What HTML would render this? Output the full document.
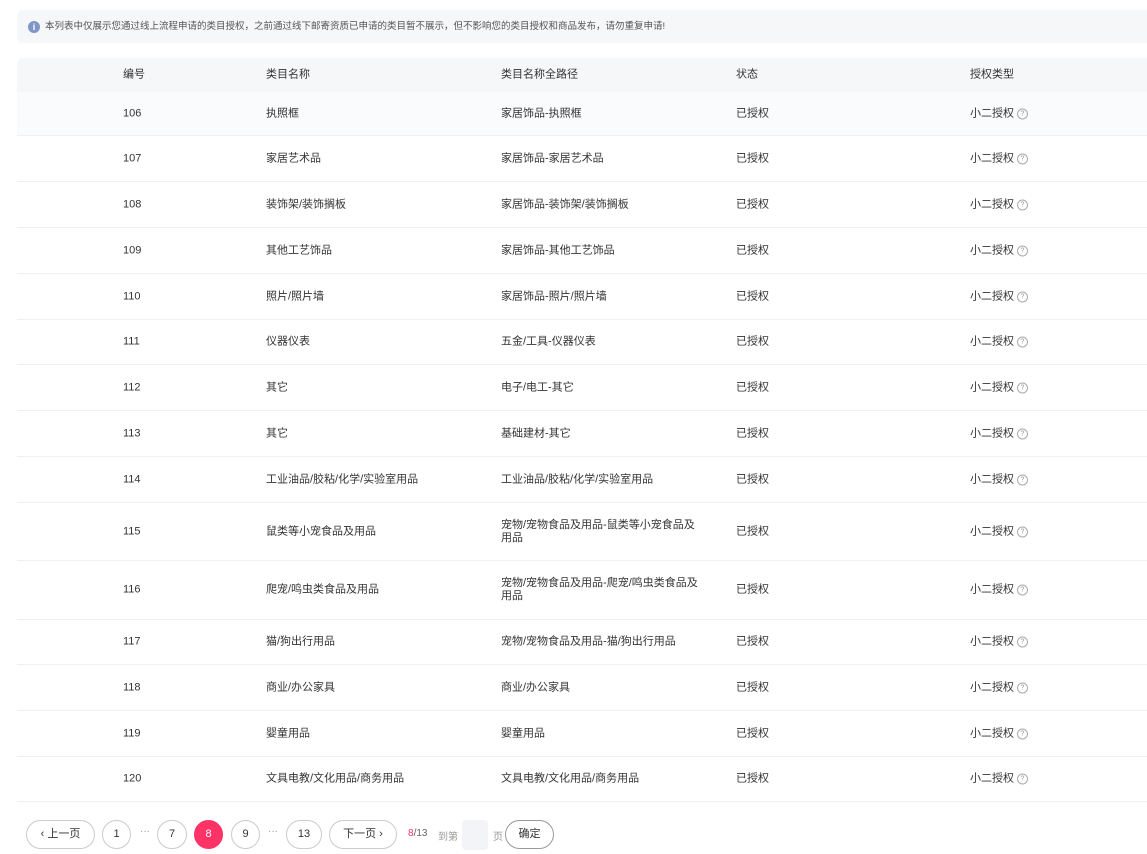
<!DOCTYPE html><html><head><meta charset="utf-8"><style>
*{margin:0;padding:0;box-sizing:border-box}
body{width:1147px;height:854px;background:#fff;font-family:"Liberation Sans","Noto Sans CJK SC",sans-serif;font-size:11px;color:#333;position:relative;overflow:hidden}
.info{position:absolute;left:17px;top:10px;width:1140px;height:33px;background:#f6f7f9;border-radius:6px;font-size:9.5px;color:#555;line-height:33px;padding-left:28px}
.info i{position:absolute;left:11px;top:11px;width:12px;height:12px;border-radius:50%;background:#7f96c7;color:#fff;font-style:normal;font-size:9px;line-height:12px;text-align:center;font-weight:bold}
.row{position:absolute;left:17px;width:1140px;border-bottom:1px solid #eef0f3}
.row span{position:absolute;top:50%;transform:translateY(-50%);line-height:13px}
.c1{left:106px}.c2{left:249px}.c3{left:484px;width:204px}.c4{left:719px}.c5{left:953px;display:flex;align-items:center}
.hd{top:58px;height:34px;background:#f6f7f9;border-radius:6px 0 0 0;border:none}
.q{display:inline-block;width:11px;height:11px;border:1px solid #aaa;border-radius:50%;font-size:7px;line-height:9px;text-align:center;color:#999;margin-left:3px;font-weight:normal}
.b{position:absolute;top:820px;height:29px;border:1px solid #c9cbd0;border-radius:15px;text-align:center;line-height:27px;font-size:11px;color:#333;background:#fff}
.t{position:absolute;top:828px;font-size:10px;color:#999}
</style></head><body>
<div class="info"><i>i</i>本列表中仅展示您通过线上流程申请的类目授权，之前通过线下邮寄资质已申请的类目暂不展示，但不影响您的类目授权和商品发布，请勿重复申请!</div>
<div class="row hd"><span class="c1" style="left:106px">编号</span><span class="c2">类目名称</span><span class="c3">类目名称全路径</span><span class="c4">状态</span><span class="c5">授权类型</span></div>
<div class="row" style="top:92px;height:44px;background:#fafbfd"><span class="c1">106</span><span class="c2">执照框</span><span class="c3">家居饰品-执照框</span><span class="c4">已授权</span><span class="c5">小二授权<b class="q">?</b></span></div>
<div class="row" style="top:136px;height:46px"><span class="c1">107</span><span class="c2">家居艺术品</span><span class="c3">家居饰品-家居艺术品</span><span class="c4">已授权</span><span class="c5">小二授权<b class="q">?</b></span></div>
<div class="row" style="top:182px;height:46px"><span class="c1">108</span><span class="c2">装饰架/装饰搁板</span><span class="c3">家居饰品-装饰架/装饰搁板</span><span class="c4">已授权</span><span class="c5">小二授权<b class="q">?</b></span></div>
<div class="row" style="top:228px;height:46px"><span class="c1">109</span><span class="c2">其他工艺饰品</span><span class="c3">家居饰品-其他工艺饰品</span><span class="c4">已授权</span><span class="c5">小二授权<b class="q">?</b></span></div>
<div class="row" style="top:274px;height:46px"><span class="c1">110</span><span class="c2">照片/照片墙</span><span class="c3">家居饰品-照片/照片墙</span><span class="c4">已授权</span><span class="c5">小二授权<b class="q">?</b></span></div>
<div class="row" style="top:320px;height:45px"><span class="c1">111</span><span class="c2">仪器仪表</span><span class="c3">五金/工具-仪器仪表</span><span class="c4">已授权</span><span class="c5">小二授权<b class="q">?</b></span></div>
<div class="row" style="top:365px;height:46px"><span class="c1">112</span><span class="c2">其它</span><span class="c3">电子/电工-其它</span><span class="c4">已授权</span><span class="c5">小二授权<b class="q">?</b></span></div>
<div class="row" style="top:411px;height:46px"><span class="c1">113</span><span class="c2">其它</span><span class="c3">基础建材-其它</span><span class="c4">已授权</span><span class="c5">小二授权<b class="q">?</b></span></div>
<div class="row" style="top:457px;height:46px"><span class="c1">114</span><span class="c2">工业油品/胶粘/化学/实验室用品</span><span class="c3">工业油品/胶粘/化学/实验室用品</span><span class="c4">已授权</span><span class="c5">小二授权<b class="q">?</b></span></div>
<div class="row" style="top:503px;height:58px"><span class="c1">115</span><span class="c2">鼠类等小宠食品及用品</span><span class="c3">宠物/宠物食品及用品-鼠类等小宠食品及<br>用品</span><span class="c4">已授权</span><span class="c5">小二授权<b class="q">?</b></span></div>
<div class="row" style="top:561px;height:59px"><span class="c1">116</span><span class="c2">爬宠/鸣虫类食品及用品</span><span class="c3">宠物/宠物食品及用品-爬宠/鸣虫类食品及<br>用品</span><span class="c4">已授权</span><span class="c5">小二授权<b class="q">?</b></span></div>
<div class="row" style="top:620px;height:45px"><span class="c1">117</span><span class="c2">猫/狗出行用品</span><span class="c3">宠物/宠物食品及用品-猫/狗出行用品</span><span class="c4">已授权</span><span class="c5">小二授权<b class="q">?</b></span></div>
<div class="row" style="top:665px;height:46px"><span class="c1">118</span><span class="c2">商业/办公家具</span><span class="c3">商业/办公家具</span><span class="c4">已授权</span><span class="c5">小二授权<b class="q">?</b></span></div>
<div class="row" style="top:711px;height:46px"><span class="c1">119</span><span class="c2">婴童用品</span><span class="c3">婴童用品</span><span class="c4">已授权</span><span class="c5">小二授权<b class="q">?</b></span></div>
<div class="row" style="top:757px;height:45px"><span class="c1">120</span><span class="c2">文具电教/文化用品/商务用品</span><span class="c3">文具电教/文化用品/商务用品</span><span class="c4">已授权</span><span class="c5">小二授权<b class="q">?</b></span></div>
<div class="b" style="left:26px;width:69px">‹ 上一页</div>
<div class="b" style="left:102px;width:29px">1</div>
<div class="t" style="left:140px;top:826px">···</div>
<div class="b" style="left:157px;width:30px">7</div>
<div class="b" style="left:194px;width:29px;background:#ff3366;border-color:#ff3366;color:#fff">8</div>
<div class="b" style="left:231px;width:29px">9</div>
<div class="t" style="left:268px;top:826px">···</div>
<div class="b" style="left:286px;width:36px">13</div>
<div class="b" style="left:329px;width:68px">下一页 ›</div>
<div class="t" style="left:408px;color:#666"><span style="color:#ff3366">8</span>/13</div>
<div class="t" style="left:438px">到第</div>
<div style="position:absolute;left:462px;top:820px;width:26px;height:30px;background:#f3f4f7;border-radius:4px"></div>
<div class="t" style="left:493px">页</div>
<div class="b" style="left:505px;width:49px;border-color:#999">确定</div>
</body></html>
